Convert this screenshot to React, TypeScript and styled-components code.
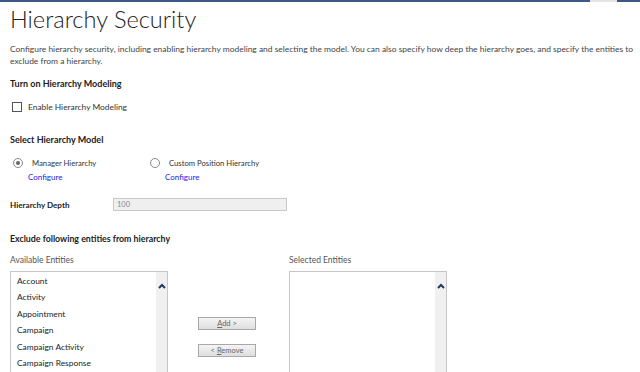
import React, { useState } from "react";
import styled, { createGlobalStyle } from "styled-components";

const GlobalStyle = createGlobalStyle`
  html, body {
    margin: 0;
    padding: 0;
    background: #ffffff;
  }
  body {
    font-family: Lato, "Open Sans", "Liberation Sans", sans-serif;
    color: #333;
    overflow: hidden;
  }
`;

const availableEntities = [
  "Account",
  "Activity",
  "Appointment",
  "Campaign",
  "Campaign Activity",
  "Campaign Response",
];

function App() {
  const [model, setModel] = useState("manager");
  const [enabled, setEnabled] = useState(false);

  return (
    <>
      <GlobalStyle />
      <TopBar>
        <BarPiece $grow />
        <BarGap />
        <BarPiece style={{ width: 23 }} />
      </TopBar>
      <Page>
        <Title>Hierarchy Security</Title>
        <Description>
          Configure hierarchy security, including enabling hierarchy modeling and selecting the model. You can also
          specify how deep the hierarchy goes, and specify the entities to exclude from a hierarchy.
        </Description>

        <SectionTitle $top={11} $size={9}>Turn on Hierarchy Modeling</SectionTitle>
        <CheckRow onClick={() => setEnabled(p => !p)}>
          <CheckBox $checked={enabled} />
          <span>Enable Hierarchy Modeling</span>
        </CheckRow>

        <SectionTitle $top={21} $size={9}>Select Hierarchy Model</SectionTitle>
        <ModelRow>
          <ModelOption>
            <RadioLine onClick={() => setModel("manager")}>
              <Radio $checked={model === "manager"} />
              <span>Manager Hierarchy</span>
            </RadioLine>
            <ConfigLink href="#">Configure</ConfigLink>
          </ModelOption>
          <ModelOption>
            <RadioLine onClick={() => setModel("position")}>
              <Radio $checked={model === "position"} />
              <span>Custom Position Hierarchy</span>
            </RadioLine>
            <ConfigLink href="#">Configure</ConfigLink>
          </ModelOption>
        </ModelRow>

        <DepthRow>
          <DepthLabel>Hierarchy Depth</DepthLabel>
          <DepthInput value="100" readOnly />
        </DepthRow>

        <SectionTitle $top={22} $size={8.8}>Exclude following entities from hierarchy</SectionTitle>
        <EntitiesRow>
          <EntityColumn>
            <ListLabel>Available Entities</ListLabel>
            <ListBox>
              <ListItems>
                {availableEntities.map(e => (
                  <ListItem key={e}>{e}</ListItem>
                ))}
              </ListItems>
              <ScrollTrack>
                <Chevron />
              </ScrollTrack>
            </ListBox>
          </EntityColumn>
          <Buttons>
            <MoveButton>
              <u>A</u>dd &gt;
            </MoveButton>
            <MoveButton>
              &lt; <u>R</u>emove
            </MoveButton>
          </Buttons>
          <EntityColumn>
            <ListLabel>Selected Entities</ListLabel>
            <ListBox>
              <ListItems />
              <ScrollTrack>
                <Chevron />
              </ScrollTrack>
            </ListBox>
          </EntityColumn>
        </EntitiesRow>
      </Page>
    </>
  );
}

export default App;

function Chevron() {
  return (
    <svg width="8" height="6" viewBox="0 0 8 6">
      <path d="M1 5 L4 2 L7 5" fill="none" stroke="#1f3a5f" strokeWidth="2" />
    </svg>
  );
}

const TopBar = styled.div`
  display: flex;
  height: 2px;
`;

const BarPiece = styled.div<{ $grow?: boolean }>`
  flex: ${p => (p.$grow ? 1 : "none")};
  background: #3d5a86;
`;

const BarGap = styled.div`
  width: 27px;
  background: #e4e4e4;
`;

const Page = styled.div`
  padding: 0 4px 0 10px;
`;

const Title = styled.h1`
  margin: 2px 0 0;
  font-family: Lato, "Open Sans", "Liberation Sans", sans-serif;
  font-weight: 300;
  font-size: 23.6px;
  line-height: 30px;
  color: #222;
`;

const Description = styled.p`
  margin: 9px 0 0;
  font-size: 8.45px;
  line-height: 12px;
  color: #444;
`;

const SectionTitle = styled.div<{ $top: number; $size: number }>`
  margin-top: ${p => p.$top}px;
  font-size: ${p => p.$size}px;
  font-weight: 700;
  line-height: 12px;
  color: #222;
`;

const CheckRow = styled.label`
  display: flex;
  align-items: center;
  gap: 6px;
  height: 12px;
  margin-top: 11px;
  padding-left: 2px;
  font-size: 8.4px;
  color: #333;
  cursor: pointer;
`;

const CheckBox = styled.span<{ $checked: boolean }>`
  width: 8px;
  height: 8px;
  border: 1px solid #555;
  background: ${p => (p.$checked ? "#3d5a86" : "#fff")};
`;

const ModelRow = styled.div`
  display: flex;
  margin-top: 11px;
  padding-left: 3px;
`;

const ModelOption = styled.div`
  width: 137px;
  display: flex;
  flex-direction: column;
`;

const RadioLine = styled.div`
  display: flex;
  align-items: center;
  gap: 9px;
  font-size: 7.7px;
  line-height: 12px;
  color: #333;
  cursor: pointer;
`;

const Radio = styled.span<{ $checked: boolean }>`
  position: relative;
  width: 8px;
  height: 8px;
  border: 1px solid #888;
  border-radius: 50%;
  background: #fff;
  &::after {
    content: "";
    display: ${p => (p.$checked ? "block" : "none")};
    position: absolute;
    left: 2px;
    top: 2px;
    width: 4px;
    height: 4px;
    border-radius: 50%;
    background: #666;
  }
`;

const ConfigLink = styled.a`
  margin: 2px 0 0 15px;
  font-size: 8px;
  line-height: 12px;
  color: #1a1ae6;
  text-decoration: none;
`;

const DepthRow = styled.div`
  display: flex;
  align-items: center;
  margin-top: 15px;
`;

const DepthLabel = styled.div`
  width: 103px;
  font-size: 8.1px;
  font-weight: 700;
  color: #222;
`;

const DepthInput = styled.input`
  box-sizing: border-box;
  width: 174px;
  height: 13px;
  padding: 0 3px;
  border: 1px solid #c8c8c8;
  background: #efefef;
  font-family: Lato, "Open Sans", "Liberation Sans", sans-serif;
  font-size: 7.5px;
  color: #888;
  outline: none;
`;

const EntitiesRow = styled.div`
  display: flex;
  margin-top: 9px;
`;

const EntityColumn = styled.div`
  display: flex;
  flex-direction: column;
  width: 158px;
`;

const ListLabel = styled.div`
  font-size: 8.5px;
  line-height: 12px;
  color: #555;
`;

const ListBox = styled.div`
  display: flex;
  height: 110px;
  margin-top: 5px;
  border: 1px solid #c6c6c6;
  border-bottom: none;
  overflow: hidden;
`;

const ListItems = styled.div`
  flex: 1;
  padding: 1px 0 0 6px;
`;

const ListItem = styled.div`
  font-size: 8.4px;
  line-height: 16.4px;
  color: #222;
`;

const ScrollTrack = styled.div`
  width: 11px;
  background: #f0f0f0;
  display: flex;
  justify-content: center;
  padding-top: 11px;
`;

const Buttons = styled.div`
  display: flex;
  flex-direction: column;
  gap: 14px;
  width: 121px;
  padding: 63px 0 0 30px;
  box-sizing: border-box;
`;

const MoveButton = styled.button`
  box-sizing: border-box;
  width: 58px;
  height: 13px;
  padding: 0;
  border: 1px solid #a8a8a8;
  background: linear-gradient(#f4f4f4, #dedede);
  font-family: Lato, "Open Sans", "Liberation Sans", sans-serif;
  font-size: 7.5px;
  line-height: 11px;
  color: #666;
  u {
    text-decoration: underline;
  }
`;
